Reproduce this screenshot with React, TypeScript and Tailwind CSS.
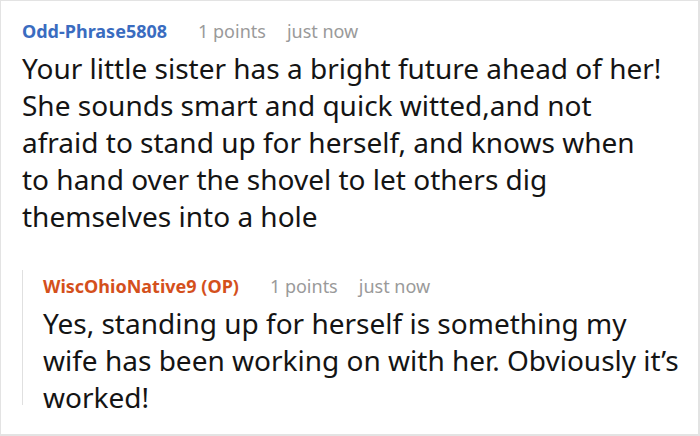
import React from "react";

const font = { fontFamily: '"Noto Sans", "Open Sans", sans-serif' };

export default function App() {
  return (
    <div
      style={font}
      className="w-[700px] h-[436px] bg-white border-t border-l border-r-2 border-b-2 border-[#e3e3e3] pl-[21px] pt-[14px] overflow-hidden"
    >
      <div>
        <div className="flex items-center h-[32px] leading-[32px] text-[18px]">
          <span className="font-bold text-[#3a6cc0]">Odd-Phrase5808</span>
          <span className="ml-[31px] text-[#9a9a9a]">1 points</span>
          <span className="ml-[21px] text-[#9a9a9a]">just now</span>
        </div>
        <p className="mt-[3px] text-[28px] leading-[37px] text-[#141414] whitespace-nowrap">
          Your little sister has a bright future ahead of her!
          <br />
          She sounds smart and quick witted,and not
          <br />
          afraid to stand up for herself, and knows when
          <br />
          to hand over the shovel to let others dig
          <br />
          themselves into a hole
        </p>
      </div>
      <div className="mt-[49px] border-l border-[#e0e0e0] pl-[20px] h-[135px]">
        <div className="-mt-[14px] flex items-center h-[32px] leading-[32px] text-[18px]">
          <span className="font-bold text-[#d4501c]">WiscOhioNative9 (OP)</span>
          <span className="ml-[31px] text-[#9a9a9a]">1 points</span>
          <span className="ml-[21px] text-[#9a9a9a]">just now</span>
        </div>
        <p className="mt-[3px] text-[28px] leading-[37px] text-[#141414] whitespace-nowrap">
          Yes, standing up for herself is something my
          <br />
          wife has been working on with her. Obviously it’s
          <br />
          worked!
        </p>
      </div>
    </div>
  );
}
